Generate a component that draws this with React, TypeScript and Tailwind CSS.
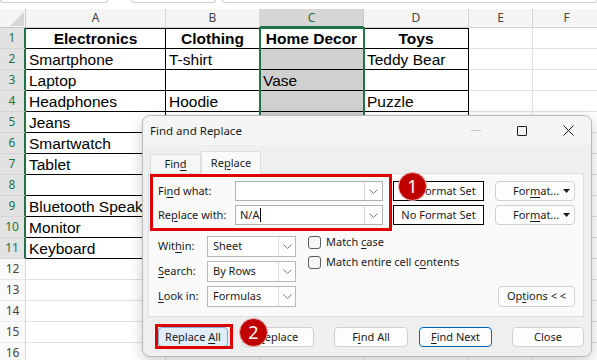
import React from "react";

const COLW = ["w-[140px]", "w-[94px]", "w-[104px]", "w-[105px]", "w-[64px]", "w-[68px]"];
const LETTERS = ["A", "B", "C", "D", "E", "F"];

const DATA: string[][] = [
  ["Electronics", "Clothing", "Home Decor", "Toys"],
  ["Smartphone", "T-shirt", "", "Teddy Bear"],
  ["Laptop", "", "Vase", ""],
  ["Headphones", "Hoodie", "", "Puzzle"],
  ["Jeans", "", "", ""],
  ["Smartwatch", "", "", ""],
  ["Tablet", "", "", ""],
  ["", "", "", ""],
  ["Bluetooth Speaker", "", "", ""],
  ["Monitor", "", "", ""],
  ["Keyboard", "", "", ""],
];

const U = ({ children }: { children: React.ReactNode }) => (
  <span className="underline decoration-1 underline-offset-[2px]">{children}</span>
);

const Chevron = () => (
  <svg width="9" height="5" viewBox="0 0 9 5">
    <path d="M0.5 0.5 L4.5 4.5 L8.5 0.5" fill="none" stroke="#7a7a7a" strokeWidth="1" />
  </svg>
);

const Tri = () => (
  <svg width="7" height="4" viewBox="0 0 7 4">
    <path d="M0 0 L7 0 L3.5 4 Z" fill="#1b1b1b" />
  </svg>
);

function SheetRow({ r }: { r: number }) {
  const inData = r <= 11;
  return (
    <div className="flex h-[21px]">
      <div
        className={
          inData
            ? "w-[26px] shrink-0 border-r-2 border-r-[#217346] border-b border-b-[#d5d5d5] bg-[#e2e2e2] text-[#217346] flex items-center justify-center text-[12px] font-['Noto_Sans']"
            : "w-[26px] shrink-0 border-r border-r-[#d5d5d5] border-b border-b-[#e8e8e8] bg-[#fafafa] text-[#444] flex items-center justify-center text-[12px] font-['Noto_Sans']"
        }
      >
        {r}
      </div>
      {COLW.map((w, c) => {
        const isData = r <= 11 && c <= 3;
        const sel = c === 2 && r >= 2 && r <= 11;
        const text = isData ? DATA[r - 1][c] : "";
        return (
          <div
            key={c}
            className={[
              w,
              "shrink-0 h-full flex items-end border-r border-b",
              isData ? "border-black" : "border-[#e1e1e1]",
              r === 1 && isData ? "border-t" : "",
              sel ? "bg-[#d0d0d0]" : "bg-white",
            ].join(" ")}
          >
            {text &&
              (r === 1 ? (
                <span className="w-full text-center font-bold leading-[18px] whitespace-nowrap">{text}</span>
              ) : (
                <span className="pl-[3px] leading-[18px] whitespace-nowrap">{text}</span>
              ))}
          </div>
        );
      })}
    </div>
  );
}

function Select({ text }: { text: string }) {
  return (
    <div className="w-[89px] h-[21px] bg-white border border-[#b8b8b8] flex">
      <div className="flex-1 pl-[5px] flex items-center">{text}</div>
      <div className="w-[17px] border-l border-[#dadada] flex items-center justify-center">
        <Chevron />
      </div>
    </div>
  );
}

function Input({ children }: { children?: React.ReactNode }) {
  return (
    <div className="w-[148px] h-[20px] bg-white border border-[#b0b0b0] flex">
      <div className="flex-1 pl-[4px] flex items-center">{children}</div>
      <div className="w-[18px] border-l border-[#dadada] flex items-center justify-center">
        <Chevron />
      </div>
    </div>
  );
}

function FormatBtn() {
  return (
    <div className="ml-[11px] w-[80px] h-[20px] rounded-[4px] border border-[#d0d0d0] bg-[#fdfdfd] flex items-center justify-between pl-[17px] pr-[4px]">
      <span>
        For<U>m</U>at...
      </span>
      <Tri />
    </div>
  );
}

function Check({ children }: { children: React.ReactNode }) {
  return (
    <div className="flex items-center h-[13px]">
      <div className="w-[13px] h-[13px] rounded-[3px] border border-[#5e5e5e] bg-[#f6f6f6]" />
      <span className="ml-[5px]">{children}</span>
    </div>
  );
}

function Badge({ n, cls }: { n: string; cls: string }) {
  return (
    <div
      className={
        "absolute w-[29px] h-[29px] rounded-full bg-[#c00000] border border-[#e8b0b0] text-white flex items-center justify-center text-[18px] font-['Noto_Sans'] " +
        cls
      }
    >
      {n}
    </div>
  );
}

export default function App() {
  return (
    <div className="relative w-[597px] h-[360px] overflow-hidden bg-white font-['Liberation_Sans'] text-[15.5px] text-black">
      {/* top strip */}
      <div className="flex h-[9px]">
        <div className="w-[108px] h-[3px] border border-t-0 border-[#d0d0d0] rounded-b-[3px]" />
        <div className="ml-[23px] w-[85px] h-[3px] border border-t-0 border-[#d0d0d0] rounded-b-[3px]" />
        <div className="ml-[6px] flex-1 h-[3px] border border-t-0 border-[#d0d0d0] rounded-b-[3px]" />
      </div>
      {/* column headers */}
      <div className="flex h-[19px] font-['Noto_Sans'] text-[12px] text-[#444]">
        <div className="w-[26px] shrink-0 border-r border-b border-[#c8c8c8] bg-[#f5f5f5] flex items-end justify-end pr-[1px] pb-[1px]">
          <svg width="14" height="14" viewBox="0 0 14 14">
            <polygon points="14,0 14,14 0,14" fill="#d6d6d6" />
          </svg>
        </div>
        {COLW.map((w, c) => (
          <div
            key={c}
            className={[
              w,
              "shrink-0 flex items-center justify-center",
              c === 2
                ? "bg-[#d6d6d6] text-[#217346] border-b-2 border-b-[#217346] border-r border-r-[#c8c8c8]"
                : "bg-[#f5f5f5] border-r border-b border-[#d5d5d5]",
            ].join(" ")}
          >
            {LETTERS[c]}
          </div>
        ))}
      </div>
      {/* rows */}
      {Array.from({ length: 16 }, (_, i) => (
        <SheetRow key={i} r={i + 1} />
      ))}

      {/* selection outline over column C */}
      <div className="absolute left-[259px] top-[27px] w-[106px] h-[234px] border-2 border-[#217346] pointer-events-none" />

      {/* dialog */}
      <div className="absolute left-[142px] top-[115px] w-[450px] h-[242px] rounded-[8px] border border-[#b9b9b9] bg-[#efefef] shadow-[0_4px_14px_rgba(0,0,0,0.2)] flex flex-col font-['Noto_Sans'] text-[11px] text-[#1b1b1b]">
        {/* title bar */}
        <div className="h-[29px] shrink-0 flex items-center pl-[7px] bg-[#f5f5f5] rounded-t-[8px] text-[11.5px]">
          <span>Find and Replace</span>
          <div className="ml-auto flex h-full">
            <div className="w-[46px] flex items-center justify-center">
              <div className="w-[10px] h-px bg-[#c4c4c4]" />
            </div>
            <div className="w-[46px] flex items-center justify-center">
              <div className="w-[10px] h-[10px] border border-[#1b1b1b] rounded-[1px]" />
            </div>
            <div className="w-[46px] flex items-center justify-center">
              <svg width="11" height="11" viewBox="0 0 11 11">
                <path d="M0.5 0.5 L10.5 10.5 M10.5 0.5 L0.5 10.5" stroke="#1b1b1b" strokeWidth="1" />
              </svg>
            </div>
          </div>
        </div>
        {/* body */}
        <div className="px-[5px] flex flex-col">
          {/* tabs */}
          <div className="mt-[6px] h-[22px] flex items-end">
            <div className="ml-[2px] w-[51px] h-[19px] border border-b-0 border-[#dedede] bg-[#f6f6f6] flex items-center justify-center">
              <span>
                Fin<U>d</U>
              </span>
            </div>
            <div className="relative z-10 -mb-px w-[60px] h-[23px] border border-b-0 border-[#dedede] bg-[#fafafa] flex items-center justify-center">
              <span>
                Re<U>p</U>lace
              </span>
            </div>
          </div>
          {/* panel */}
          <div className="w-[436px] h-[144px] border border-[#dedede] bg-[#fafafa] pl-[9px] pr-[8px] pt-[7px] flex flex-col">
            <div className="flex items-center h-[20px]">
              <div className="w-[77px]">
                Fi<U>n</U>d what:
              </div>
              <Input />
              <div className="ml-[10px] w-[91px] h-[20px] border border-black bg-white flex items-center justify-center">
                No Format Set
              </div>
              <FormatBtn />
            </div>
            <div className="mt-[4px] flex items-center h-[20px]">
              <div className="w-[77px]">
                Re<U>p</U>lace with:
              </div>
              <Input>
                <span>N/A</span>
                <span className="ml-px w-px h-[14px] bg-black" />
              </Input>
              <div className="ml-[10px] w-[91px] h-[20px] border border-black bg-white flex items-center justify-center">
                No Format Set
              </div>
              <FormatBtn />
            </div>
            <div className="mt-[11px] flex">
              <div className="flex flex-col gap-[4px]">
                <div className="flex items-center">
                  <div className="w-[49px]">
                    Wit<U>h</U>in:
                  </div>
                  <Select text="Sheet" />
                </div>
                <div className="flex items-center">
                  <div className="w-[49px]">
                    <U>S</U>earch:
                  </div>
                  <Select text="By Rows" />
                </div>
                <div className="flex items-center">
                  <div className="w-[49px]">
                    <U>L</U>ook in:
                  </div>
                  <Select text="Formulas" />
                </div>
              </div>
              <div className="ml-[12px] flex flex-col gap-[7px]">
                <Check>
                  Match <U>c</U>ase
                </Check>
                <Check>
                  Match entire cell c<U>o</U>ntents
                </Check>
              </div>
              <div className="ml-auto self-end w-[77px] h-[21px] rounded-[4px] border border-[#d0d0d0] bg-[#fdfdfd] flex items-center justify-center">
                <span>
                  Op<U>t</U>ions &lt; &lt;
                </span>
              </div>
            </div>
          </div>
          {/* bottom buttons */}
          <div className="mt-[10px] flex h-[20px]">
            <div className="ml-[10px] w-[70px] rounded-[4px] border border-[#7aa7d6] bg-[#e1edf8] flex items-center justify-center">
              <span>
                Replace <U>A</U>ll
              </span>
            </div>
            <div className="ml-[14px] w-[72px] rounded-[4px] border border-[#d0d0d0] bg-[#fdfdfd] flex items-center justify-center">
              <span>
                <U>R</U>eplace
              </span>
            </div>
            <div className="ml-[20px] w-[74px] rounded-[4px] border border-[#d0d0d0] bg-[#fdfdfd] flex items-center justify-center">
              <span>
                F<U>i</U>nd All
              </span>
            </div>
            <div className="ml-[11px] w-[73px] rounded-[4px] border border-[#0067c0] bg-[#fdfdfd] flex items-center justify-center">
              <span>
                <U>F</U>ind Next
              </span>
            </div>
            <div className="ml-[20px] w-[72px] rounded-[4px] border border-[#d0d0d0] bg-[#fdfdfd] flex items-center justify-center">
              <span>Close</span>
            </div>
          </div>
        </div>

        {/* annotations */}
        <div className="absolute left-[7px] top-[58px] w-[242px] h-[57px] border-[3px] border-[#e00000] pointer-events-none" />
        <Badge n="1" cls="left-[255px] top-[56px]" />
        <div className="absolute left-[12px] top-[208px] w-[78px] h-[25px] border-[3px] border-[#e00000] pointer-events-none" />
        <Badge n="2" cls="left-[96px] top-[202px]" />
      </div>
    </div>
  );
}
